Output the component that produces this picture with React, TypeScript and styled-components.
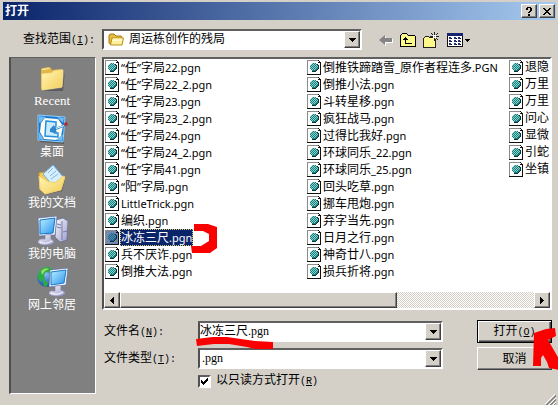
import React from "react";
import styled, { createGlobalStyle, css } from "styled-components";

const GlobalStyle = createGlobalStyle`
  *, *::before, *::after { box-sizing: border-box; }
  body {
    margin: 0;
    background: #d4d0c8;
    color: #000;
    font: 12px/14px "Liberation Sans", "Noto Sans CJK SC", sans-serif;
  }
`;

const raised = css`
  border: 1px solid;
  border-color: #fff #404040 #404040 #fff;
  box-shadow: inset -1px -1px 0 #808080;
  background: #d4d0c8;
`;

const sunken = css`
  border: 2px solid;
  border-color: #606060 #fff #fff #505050;
`;

const Window = styled.main`
  display: flex;
  flex-direction: column;
  padding: 2px 2px 0 3px;
`;

const TitleBar = styled.header`
  display: flex;
  align-items: center;
  gap: 2px;
  height: 18px;
  padding: 0 1px 0 2px;
  background: linear-gradient(to right, #0a246a, #a6caf0);
`;

const Title = styled.h1`
  flex: 1;
  margin: 0;
  color: #fff;
  font-size: 12px;
  line-height: 16px;
  font-weight: 700;
`;

const CaptionButton = styled.button`
  ${raised}
  display: grid;
  place-items: center;
  width: 16px;
  height: 14px;
  padding: 0;
`;

const LookRow = styled.div`
  display: flex;
  align-items: center;
  padding: 9px 0 7px 20px;
`;

const LookLabel = styled.label`
  width: 79px;
`;

const Mono = styled.span`
  font-family: "Liberation Mono", monospace;
  font-size: 10px;
`;

const Serif = styled.span`
  font-family: "Liberation Serif", serif;
  font-size: 13px;
`;

const Narrow = styled.span`
  font-family: "Noto Sans", sans-serif;
  font-size: 11px;
`;

const Combo = styled.div`
  ${sunken}
  position: relative;
  display: flex;
  align-items: center;
  flex: 1;
  min-width: 0;
  height: 21px;
  background: #fff;
`;

const fieldStyle = css`
  flex: 1;
  min-width: 0;
  height: 17px;
  padding: 0;
  border: 0;
  outline: 0;
  background: transparent;
  color: #000;
  appearance: none;
`;

const Select = styled.select<{ $serif?: boolean }>`
  ${fieldStyle}
  padding-left: ${(p) => (p.$serif ? 2 : 5)}px;
  font: 12px/17px ${(p) => (p.$serif ? '"Liberation Serif"' : '"Liberation Sans"')},
    "Noto Sans CJK SC", sans-serif;
`;

const TextInput = styled.input`
  ${fieldStyle}
  font: 12px/17px "Liberation Serif", "Noto Sans CJK SC", serif;
`;

const DropButton = styled.button`
  ${raised}
  display: grid;
  place-items: center;
  flex: none;
  width: 16px;
  height: 17px;
  padding: 0;
`;

const FolderSlot = styled.span`
  display: flex;
  padding-left: 4px;
`;

const Tools = styled.nav`
  display: flex;
  align-items: center;
  width: 194px;
  padding-left: 17px;
  gap: 7px;
`;

const ToolButton = styled.button`
  display: flex;
  padding: 0;
  border: 0;
  background: transparent;
`;

const Body = styled.div`
  display: flex;
  gap: 6px;
  padding: 0 4px 0 6px;
`;

const Places = styled.nav`
  ${sunken}
  border-width: 1px;
  border-left-width: 2px;
  flex: none;
  width: 87px;
  padding-top: 4px;
  background: #808080;
  display: flex;
  flex-direction: column;
  gap: 5px;
`;

const Place = styled.a`
  display: flex;
  flex-direction: column;
  align-items: center;
  padding-right: 2px;
  color: #fff;
  text-decoration: none;
  line-height: 14px;
`;

const Content = styled.section`
  flex: 1;
  min-width: 0;
`;

const ListPane = styled.div`
  ${sunken}
  background: #fff;
  overflow: hidden;
`;

const Files = styled.ul`
  display: grid;
  grid-auto-flow: column;
  grid-template-rows: repeat(13, 17px);
  grid-auto-columns: 202px;
  margin: 0;
  padding: 0 0 12px 1px;
  list-style: none;
`;

const FileRow = styled.li`
  display: flex;
  align-items: center;
  gap: 1px;
  white-space: nowrap;
`;

const FileName = styled.span<{ $selected?: boolean }>`
  position: relative;
  height: 17px;
  padding: 0 1px;
  line-height: 17px;
  ${(p) =>
    p.$selected &&
    css`
      background: #0a246a;
      color: #fff;
      outline: 1px dotted #d8c878;
      outline-offset: -1px;
    `}
`;

const ScrollBar = styled.div`
  display: flex;
  height: 16px;
  background: repeating-conic-gradient(#fff 0 25%, #d4d0c8 0 50%) 0 0 / 2px 2px;
`;

const Track = styled.div`
  flex: 1;
`;

const Thumb = styled.div`
  ${raised}
  width: 67%;
  height: 16px;
`;

const ScrollButton = styled(DropButton)`
  height: 16px;
`;

const Form = styled.form`
  display: grid;
  grid-template-columns: 96px 1fr 75px;
  grid-template-rows: 23px 23px 14px;
  row-gap: 4px;
  align-items: center;
  padding: 10px 0 6px;
`;

const FormLabel = styled.label`
  padding-left: 2px;
`;

const FieldCell = styled.div`
  display: flex;
  margin-right: 34px;
`;

const PushButton = styled.button<{ $primary?: boolean }>`
  ${raised}
  position: relative;
  width: 75px;
  height: 23px;
  padding: 0;
  color: #000;
  font: 12px/14px "Liberation Sans", "Noto Sans CJK SC", sans-serif;
  ${(p) =>
    p.$primary &&
    css`
      border-color: #000;
      box-shadow: inset 1px 1px 0 #fff, inset -1px -1px 0 #404040, inset -2px -2px 0 #808080;
    `}
`;

const CheckLine = styled.label`
  grid-column: 2;
  display: flex;
  align-items: center;
  gap: 5px;
`;

const CheckBox = styled.input`
  ${sunken}
  appearance: none;
  width: 13px;
  height: 13px;
  margin: 0;
  background: #fff;
  &:not(:checked) + svg {
    display: none;
  }
`;

const CheckHolder = styled.span`
  position: relative;
  display: flex;
`;

const CheckMark = styled.svg`
  position: absolute;
  left: 3px;
  top: 3px;
  pointer-events: none;
`;

const Footer = styled.footer`
  display: flex;
  justify-content: flex-end;
  align-items: flex-end;
  height: 11px;
`;

const Mark = styled.svg<{ $left: number; $top: number }>`
  position: absolute;
  left: ${(p) => p.$left}px;
  top: ${(p) => p.$top}px;
  z-index: 2;
  fill: #fb0000;
  pointer-events: none;
`;

const Mixed = ({ text }: { text: string }) => (
  <>
    {text.split(/([\x20-\x7e“”]+)/).map((part, i) =>
      i % 2 ? <Narrow key={i}>{part}</Narrow> : part
    )}
  </>
);

const Hot = ({ k, colon }: { k: string; colon?: boolean }) => (
  <Mono>
    (<u>{k}</u>){colon ? ":" : ""}
  </Mono>
);

const DownArrow = () => (
  <svg width="7" height="4" shapeRendering="crispEdges" aria-hidden="true">
    <path d="M0 0h7v1H0zM1 1h5v1H1zM2 2h3v1H2zM3 3h1v1H3z" />
  </svg>
);

const SideArrow = ({ right }: { right?: boolean }) => (
  <svg width="4" height="7" shapeRendering="crispEdges" aria-hidden="true">
    <path
      d={
        right
          ? "M0 0h1v7H0zM1 1h1v5H1zM2 2h1v3H2zM3 3h1v1H3z"
          : "M3 0h1v7H3zM2 1h1v5H2zM1 2h1v3H1zM0 3h1v1H0z"
      }
    />
  </svg>
);

const FileIcon = ({ selected }: { selected?: boolean }) => (
  <svg width="14" height="15" shapeRendering="crispEdges" aria-hidden="true">
    <path d="M0 0h11v1h1v1h1v12H0z" fill={selected ? "#7288ac" : "#fff"} />
    <path d="M0 0h11v1H1v13H0z" fill="#8b8b8b" />
    <path d="M13 3h1v12H0v-1h13zM11 0h1v1h-1zM12 1h1v1h-1zM11 2h3v1h-3z" fill="#111" />
    <path d="M10 4h1v1h1v4h-1v1h-1v1H9v1H5v-1h4v-1h1z" fill="#0a3438" />
    <path
      d="M5 2h4v1h1v1h1v4h-1v1H9v1H5V9H4V8H3V4h1V3h1z"
      fill={selected ? "#23618b" : "#158080"}
      transform="translate(0 1)"
    />
    <path
      d="M5 3h1v1H5zM7 3h1v1H7zM4 4h1v1H4zM6 4h1v1H6zM8 4h1v1H8zM3 5h1v1H3zM5 5h1v1H5zM7 5h1v1H7zM9 5h1v1H9zM4 6h1v1H4zM6 6h1v1H6zM8 6h1v1H8zM10 6h1v1h-1zM3 7h1v1H3zM5 7h1v1H5zM7 7h1v1H7zM9 7h1v1H9zM4 8h1v1H4zM6 8h1v1H6zM8 8h1v1H8zM5 9h1v1H5zM7 9h1v1H7z"
      fill={selected ? "#528eae" : "#8fd0cb"}
    />
  </svg>
);

const SmallFolder = () => (
  <svg width="16" height="14" aria-hidden="true">
    <path d="M1 3q0-2 2-2h3l2 2h5q1 0 1 2v6H2q-1 0-1-2z" fill="#e9bd3d" stroke="#a97b13" />
    <path d="M4 5h11.500l-1.500 7H2.500z" fill="#fff09a" stroke="#bd8f20" />
    <path d="M5 6h9M4.500 7.500h9" stroke="#fffbd4" />
  </svg>
);

const BackIcon = () => (
  <svg width="14" height="12" aria-hidden="true">
    <path d="M1 6l5-5v3h7v4H6v3z" fill="#fff" transform="translate(1 1)" />
    <path d="M0 6l6-5v3h7v4H6v3z" fill="#858585" />
  </svg>
);

const UpIcon = () => (
  <svg width="16" height="14" shapeRendering="crispEdges" aria-hidden="true">
    <path d="M1 3h1V1h5v2h8v10H1z" fill="#fdf888" />
    <path d="M2 0h5v1H2zM1 1h1v1H1zM7 1h1v1h7v1H8V2H7zM0 2h1v11H0zM15 3h1v10h-1zM0 13h16v1H0zM5 4h1v1h1v1h1v1H6v3h6v1H5V7H3V6h1V5h1z" fill="#000" />
  </svg>
);

const NewFolderIcon = () => (
  <svg width="17" height="16" shapeRendering="crispEdges" aria-hidden="true">
    <path d="M1 6h1V4h4v2h7v9H1z" fill="#fdf888" />
    <path d="M2 4h4v1H2zM1 5h1v1H1zM6 5h5v1H6zM0 6h1v9H0zM12 7h1v8h-1zM0 15h13v1H0zM11 0h1v3h-1zM11 6h1v3h-1zM7 4h3v1H7zM13 4h3v1h-3zM8 1h1v1H8zM9 2h1v1H9zM14 1h1v1h-1zM13 2h1v1h-1zM13 6h1v1h-1zM14 7h1v1h-1z" fill="#222" />
    <path d="M10 3h3v3h-3z" fill="#fff" />
    <path d="M11 4h1v1h-1z" fill="#777" />
  </svg>
);

const ViewIcon = () => (
  <svg width="24" height="14" shapeRendering="crispEdges" aria-hidden="true">
    <path d="M0 0h16v14H0z" fill="#111" />
    <path d="M0 0h16v3H0z" fill="#17246e" />
    <path d="M1 3h14v10H1z" fill="#fff" />
    <path d="M2 4h2v2H2zM7 4h2v2H7zM11 4h2v2h-2zM2 7h2v2H2zM7 7h2v2H7zM11 7h2v2h-2zM2 10h2v2H2zM7 10h2v2H7zM11 10h2v2h-2z" fill="#20306c" />
    <path d="M4 5h1v1H4zM9 5h1v1H9zM13 5h1v1h-1zM4 8h1v1H4zM9 8h1v1H9zM13 8h1v1h-1zM4 11h1v1H4zM9 11h1v1H9zM13 11h1v1h-1z" fill="#000" />
    <path d="M18 6h5v1h-5zM19 7h3v1h-3zM20 8h1v1h-1z" fill="#000" />
  </svg>
);

const Defs = styled.svg`
  display: block;
`;

const Gradients = () => (
  <Defs width="0" height="0" aria-hidden="true">
    <defs>
      <linearGradient id="yellow" x1="0" y1="0" x2="1" y2="1">
        <stop offset="0" stopColor="#fff6b4" />
        <stop offset="1" stopColor="#f3cc58" />
      </linearGradient>
      <linearGradient id="screen" x1="0" y1="0" x2="1" y2="1">
        <stop offset="0" stopColor="#b9efff" />
        <stop offset="1" stopColor="#2a94ef" />
      </linearGradient>
      <linearGradient id="metal" x1="0" y1="0" x2="1" y2="1">
        <stop offset="0" stopColor="#fafaff" />
        <stop offset="1" stopColor="#9a9cc8" />
      </linearGradient>
      <radialGradient id="globe" cx="0.4" cy="0.3" r="0.7">
        <stop offset="0" stopColor="#8fc9ff" />
        <stop offset="1" stopColor="#0f4da8" />
      </radialGradient>
    </defs>
  </Defs>
);

const RecentIcon = () => (
  <svg width="32" height="32" aria-hidden="true">
    <path d="M6 29l21 0 2-20-3 17z" fill="#444" opacity=".6" />
    <path d="M5 8q0-2 2-2l6-1q2 0 3 3l9-1q2 0 2 2l-1 16-20 3q-1-1-1-3z" fill="#e3b64a" />
    <path d="M6 12l10-1 2-2 9-1-1 17-20 3z" fill="url(#yellow)" stroke="#fbe590" strokeWidth=".7" />
    <path d="M6 7.500l7-1" stroke="#fff4b4" />
  </svg>
);

const DesktopIcon = () => (
  <svg width="32" height="32" aria-hidden="true">
    <path d="M3 29l25 2V9z" fill="#444" opacity=".6" />
    <path d="M2 2l27 2-2 25-25-2z" fill="#1673d0" stroke="#8fd2ff" />
    <path d="M3 3l7 1-6 6-1-1zM21 4l7 1-1 5zM3 19l5 8-5-1zM27 21l-1 7-6-1z" fill="#6fbbf6" />
    <path d="M9 5l13 1 5 7-2 10-5 4-12-1-4-7 1-9z" fill="#fffff0" />
    <path d="M10 8l10 1v4l-4 5 3 2h3v4l-13-1z" fill="#c9ebff" stroke="#2590de" strokeWidth="1.500" />
    <path d="M14 16l4-4 1 3 10-4 1 2-10 4 1 3-7-1z" fill="#3287ca" />
    <path d="M20 15.500l8-3" stroke="#e6faff" />
    <path d="M28 10l3-1 1 3-3 1z" fill="#b32930" />
  </svg>
);

const DocumentsIcon = () => (
  <svg width="32" height="32" aria-hidden="true">
    <path d="M8 31l18-4 4-15-6 14z" fill="#444" opacity=".6" />
    <path d="M3 9l6-1 3 4 8 3-10 14-6-3z" fill="#f3cd5b" stroke="#d19b2d" />
    <path d="M7 10L17 1l11 13-10 9z" fill="#d5efff" stroke="#6caee0" />
    <path d="M12 9l5-5M14 12l6-5M15 15l7-5" stroke="#82b6e1" />
    <path d="M3 12l8 5 8 2 8-7 2 1-4 13-16 4-5-5z" fill="url(#yellow)" stroke="#f0cf6a" />
  </svg>
);

const ComputerIcon = () => (
  <svg width="32" height="32" aria-hidden="true">
    <path d="M20 5l7-2 5 3-1 19-7 2-5-5z" fill="url(#metal)" stroke="#62659b" strokeWidth=".7" />
    <path d="M26 6v19M21 9l4 1M21 12l4 1M27 17l4-1" stroke="#777aa8" />
    <path d="M2 3l19-2-2 19-16 1z" fill="#f5f8ff" stroke="#596ca5" strokeWidth=".7" />
    <path d="M4 5l15-2-2 15-13 1z" fill="url(#screen)" stroke="#1973bd" />
    <path d="M9 20l6-1v5q4 1 3 4-4 3-11 2-6-1-5-4 2-3 7-2z" fill="url(#metal)" stroke="#777ba8" strokeWidth=".6" />
    <path d="M4 27q5 3 12-1" fill="none" stroke="#fff" />
  </svg>
);

const NetworkIcon = () => (
  <svg width="32" height="32" aria-hidden="true">
    <circle cx="11" cy="11" r="10" fill="url(#globe)" />
    <path d="M4 4q7-6 12-1l-3 4-3-1-2 3 1 4-4 3-4-5zM8 14l4 2-1 5-4-2z" fill="#30aa42" />
    <path d="M5 5q4-4 8-2L9 5l-3 4z" fill="#97dc65" />
    <path d="M14 4l18-2-2 17-17 2z" fill="#f8faff" stroke="#596ca5" strokeWidth=".7" />
    <path d="M15 6l15-2-2 13-13 2z" fill="url(#screen)" stroke="#1b7bc0" />
    <path d="M19 20l6-1v5q5 1 4 4-4 3-11 2-6-1-5-4 2-2 6-1z" fill="url(#metal)" stroke="#777ba8" strokeWidth=".6" />
    <path d="M15 27q6 3 12-1" fill="none" stroke="#fff" />
  </svg>
);

const places = [
  { label: "Recent", icon: <RecentIcon />, serif: true },
  { label: "桌面", icon: <DesktopIcon /> },
  { label: "我的文档", icon: <DocumentsIcon /> },
  { label: "我的电脑", icon: <ComputerIcon /> },
  { label: "网上邻居", icon: <NetworkIcon /> },
];

const files = [
  "“任”字局22.pgn", "“任”字局22_2.pgn", "“任”字局23.pgn", "“任”字局23_2.pgn",
  "“任”字局24.pgn", "“任”字局24_2.pgn", "“任”字局41.pgn", "“阳”字局.pgn",
  "LittleTrick.pgn", "编织.pgn", "冰冻三尺.pgn", "兵不厌诈.pgn", "倒推大法.pgn",
  "倒推铁蹄踏雪_原作者程连多.PGN", "倒推小法.pgn", "斗转星移.pgn", "疯狂战马.pgn",
  "过得比我好.pgn", "环球同乐_22.pgn", "环球同乐_25.pgn", "回头吃草.pgn",
  "挪车甩炮.pgn", "弃字当先.pgn", "日月之行.pgn", "神奇廿八.pgn", "损兵折将.pgn",
  "退隐", "万里", "万里", "问心", "显微", "引蛇", "坐镇",
];

const selectedFile = "冰冻三尺.pgn";

export default function App() {
  return (
    <>
      <GlobalStyle />
      <Gradients />
      <Window>
        <TitleBar>
          <Title>打开</Title>
          <CaptionButton type="button" aria-label="帮助">
            <svg width="6" height="9" shapeRendering="crispEdges" aria-hidden="true">
              <path d="M1 0h4v1H1zM0 1h2v2H0zM4 1h2v3H4zM3 4h2v1H3zM2 5h2v1H2zM2 7h2v2H2z" />
            </svg>
          </CaptionButton>
          <CaptionButton type="button" aria-label="关闭">
            <svg width="8" height="7" shapeRendering="crispEdges" aria-hidden="true">
              <path d="M0 0h2v1H0zM6 0h2v1H6zM1 1h2v1H1zM5 1h2v1H5zM2 2h4v1H2zM3 3h2v1H3zM2 4h4v1H2zM1 5h2v1H1zM5 5h2v1H5zM0 6h2v1H0zM6 6h2v1H6z" />
            </svg>
          </CaptionButton>
        </TitleBar>

        <LookRow>
          <LookLabel htmlFor="look-in">
            查找范围<Hot k="I" colon />
          </LookLabel>
          <Combo>
            <FolderSlot>
              <SmallFolder />
            </FolderSlot>
            <Select id="look-in">
              <option>周运栋创作的残局</option>
            </Select>
            <DropButton type="button" aria-label="展开">
              <DownArrow />
            </DropButton>
          </Combo>
          <Tools>
            <ToolButton type="button" aria-label="后退"><BackIcon /></ToolButton>
            <ToolButton type="button" aria-label="向上"><UpIcon /></ToolButton>
            <ToolButton type="button" aria-label="新建文件夹"><NewFolderIcon /></ToolButton>
            <ToolButton type="button" aria-label="查看"><ViewIcon /></ToolButton>
          </Tools>
        </LookRow>

        <Body>
          <Places>
            {places.map((p) => (
              <Place key={p.label} href="#">
                {p.icon}
                {p.serif ? <Serif>{p.label}</Serif> : <span>{p.label}</span>}
              </Place>
            ))}
          </Places>

          <Content>
            <ListPane>
              <Files>
                {files.map((name, i) => {
                  const selected = name === selectedFile;
                  return (
                    <FileRow key={i}>
                      <FileIcon selected={selected} />
                      <FileName $selected={selected}>
                        <Mixed text={name} />
                        {selected && (
                          <Mark $left={71} $top={-6} width="28" height="32" aria-hidden="true">
                            <path d="M3 1H17l9 3v21l-7 5H1l-1-7h10l8-5v-7l-6-3H3z" />
                          </Mark>
                        )}
                      </FileName>
                    </FileRow>
                  );
                })}
              </Files>
              <ScrollBar>
                <ScrollButton type="button" aria-label="向左滚动"><SideArrow /></ScrollButton>
                <Track><Thumb /></Track>
                <ScrollButton type="button" aria-label="向右滚动"><SideArrow right /></ScrollButton>
              </ScrollBar>
            </ListPane>

            <Form onSubmit={(e) => e.preventDefault()}>
              <FormLabel htmlFor="file-name">文件名<Hot k="N" colon /></FormLabel>
              <FieldCell>
                <Combo>
                  <TextInput id="file-name" defaultValue={selectedFile} />
                  <DropButton type="button" aria-label="展开"><DownArrow /></DropButton>
                  <Mark $left={-4} $top={13} width="78" height="14" aria-hidden="true">
                    <path d="M0 3l17-2h14l28 4 18 1v7H59l-8-2-18-3H18L1 10z" />
                  </Mark>
                </Combo>
              </FieldCell>
              <PushButton type="submit" $primary>
                打开<Hot k="O" />
                <Mark $left={55} $top={6} width="26" height="43" aria-hidden="true">
                  <path d="M1 6l12-4 9-1 1 8-8 4 11 19v11l-10-2-2-6-4-7-2 3v8H0z" />
                </Mark>
              </PushButton>

              <FormLabel htmlFor="file-type">文件类型<Hot k="T" colon /></FormLabel>
              <FieldCell>
                <Combo>
                  <Select id="file-type" $serif>
                    <option>.pgn</option>
                  </Select>
                  <DropButton type="button" aria-label="展开"><DownArrow /></DropButton>
                </Combo>
              </FieldCell>
              <PushButton type="button">取消</PushButton>

              <CheckLine>
                <CheckHolder>
                  <CheckBox type="checkbox" defaultChecked />
                  <CheckMark width="7" height="7" shapeRendering="crispEdges" aria-hidden="true">
                    <path d="M0 2h1v3H0zM1 3h1v3H1zM2 4h1v3H2zM3 3h1v3H3zM4 2h1v3H4zM5 1h1v3H5zM6 0h1v3H6z" />
                  </CheckMark>
                </CheckHolder>
                <span>以只读方式打开<Hot k="R" /></span>
              </CheckLine>
            </Form>
          </Content>
        </Body>

        <Footer>
          <svg width="11" height="11" aria-hidden="true">
            <path d="M0 10L10 0M4 11l7-7M8 11l3-3" stroke="#fff" />
            <path d="M1 11L11 1M2 11l9-9M5 11l6-6M6 11l5-5M9 11l2-2" stroke="#858585" />
          </svg>
        </Footer>
      </Window>
    </>
  );
}
